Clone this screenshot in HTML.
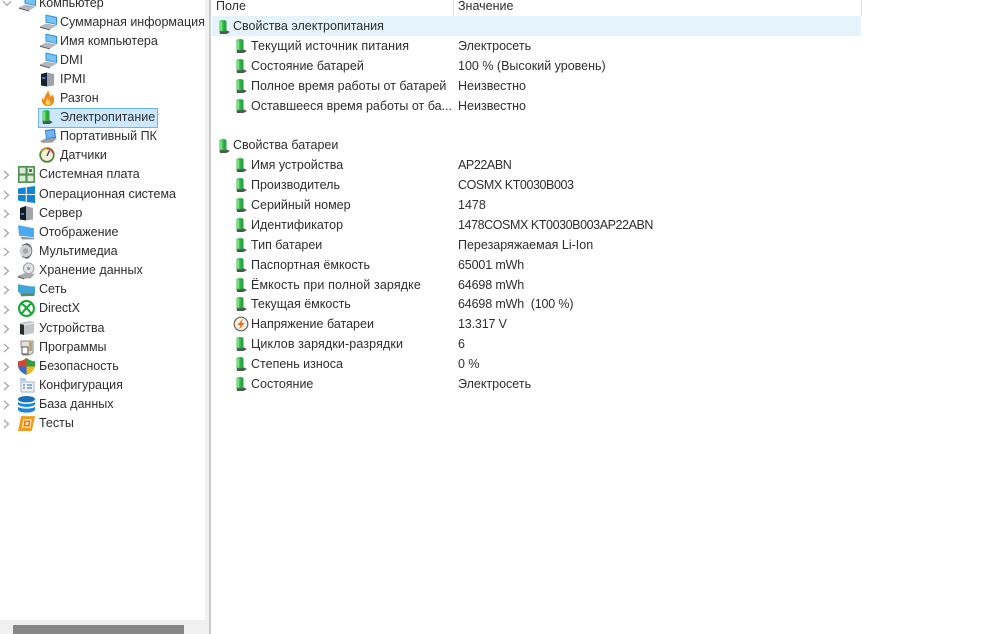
<!DOCTYPE html>
<html lang="ru">
<head>
<meta charset="utf-8">
<title>AIDA64</title>
<style>
html,body{margin:0;padding:0;background:#fff;}
#p{position:relative;width:1000px;height:634px;overflow:hidden;background:#fff;font-family:"Liberation Sans",sans-serif;font-size:12.5px;color:#2e2e2e;}
.t{position:absolute;white-space:nowrap;line-height:16px;height:16px;}
.l{letter-spacing:-.42px;}
.n{letter-spacing:-.15px;}
.w{letter-spacing:.12px;}
.i{position:absolute;width:16px;height:16px;overflow:visible;}
.c{position:absolute;width:18px;height:18px;overflow:visible;}
.a{position:absolute;width:8px;height:10px;}
.b{position:absolute;}
</style>
</head>
<body>
<div id="p">
<svg width="0" height="0" style="position:absolute">
<defs>
<symbol id="bat" viewBox="0 0 16 16"><path d="M1.500 2Q5 0 8.500 2V12.500H1.500Z" fill="#3fc252"/><path d="M5.500 1.200Q7.500 1.300 8.500 2V12.500H5.500Z" fill="#25a640"/><path d="M2.300 2.500H3.800V11.500H2.300Z" fill="#8ee88c"/><path d="M1.500 12.300H8.500V11.200L12 13L8.500 15H2Z" fill="#4a5a50"/></symbol>
<symbol id="pc" viewBox="0 0 18 18"><path d="M5.500 1.500L17 4V12L5.500 9.500Z" fill="#2f8fdc"/><path d="M6.500 2.800L16 4.900V11L6.500 8.800Z" fill="#79c3f3"/><path d="M0 13.500L6 10.500L17 12.500L10 16.500Z" fill="#b4b7ba"/><path d="M0 13.500L10 16.500V17.500L0 14.700Z" fill="#5c6064"/></symbol>
<symbol id="arr" viewBox="0 0 8 10"><path d="M2 1L6.500 5L2 9" fill="none" stroke="#a3a3a3" stroke-width="1.200"/></symbol>
</defs>
</svg>

<!-- panes -->
<div class="b" style="left:205px;top:0;width:4px;height:634px;background:#f0f0f0"></div>
<div class="b" style="left:209px;top:0;width:2px;height:634px;background:#cbcbcb"></div>
<div class="b" style="left:0;top:620px;width:205px;height:14px;background:#f0f0f0"></div>
<div class="b" style="left:13px;top:625px;width:171px;height:9px;background:#878787"></div>

<!-- selected -->
<div class="b" style="left:38px;top:108px;width:118px;height:18px;background:#cce8ff;border:1px solid #6fb2e6"></div>

<!-- tree -->
<svg class="a" style="left:3px;top:-2px;transform:rotate(90deg)"><use href="#arr"/></svg>
<svg class="c" style="left:19px;top:-6px"><use href="#pc"/></svg>
<div class="t" style="left:39px;top:-5px">Компьютер</div>

<svg class="c" style="left:40px;top:13px"><use href="#pc"/></svg>
<div class="t" style="left:60px;top:14px">Суммарная информация</div>
<svg class="c" style="left:40px;top:32px"><use href="#pc"/></svg>
<div class="t" style="left:60px;top:33px">Имя компьютера</div>
<svg class="c" style="left:40px;top:51px"><use href="#pc"/></svg>
<div class="t" style="left:60px;top:52px">DMI</div>
<svg class="i" style="left:40px;top:71px" viewBox="0 0 16 16"><path d="M1 3L7 1.500V15.500L1 14.500Z" fill="#16202e"/><path d="M7 1.500L14 3V14.500L7 15.500Z" fill="#9da3aa"/><path d="M2 6H5.500V8H2Z" fill="#3f7fc0"/></svg>
<div class="t" style="left:60px;top:71px">IPMI</div>
<svg class="i" style="left:40px;top:90px" viewBox="0 0 16 16"><path d="M8 16C3 16 1 12 2 8L4 10C4 6 7 4 8 0C9 3 10 5 10.500 7L12.500 4.500C15 8 15.500 16 8 16Z" fill="#f08a1c"/><path d="M8 15C5.500 15 5 12 7.500 8.500C8 10 11 11 10.500 13C10 14.500 9 15 8 15Z" fill="#ffd75a"/></svg>
<div class="t" style="left:60px;top:90px">Разгон</div>
<svg class="i" style="left:41px;top:109px"><use href="#bat"/></svg>
<div class="t" style="left:60px;top:109px">Электропитание</div>
<svg class="c" style="left:40px;top:127px" viewBox="0 0 18 18"><path d="M5 3L15 2L16 11L6 12Z" fill="#2f7fd0"/><path d="M6 4L14 3.200L14.800 10L6.800 11Z" fill="#6db5ee"/><path d="M0 14L5.500 11.500L17 11L12.500 15.500L3 16Z" fill="#9a9ea3"/></svg>
<div class="t" style="left:60px;top:128px">Портативный ПК</div>
<svg class="i" style="left:39px;top:147px" viewBox="0 0 16 16"><circle cx="8" cy="8" r="6.800" fill="#f5efe0" stroke="#4f8a3a" stroke-width="1.800"/><path d="M2.500 5A6.500 6.500 0 0 1 8 1.500" fill="none" stroke="#d9a020" stroke-width="1.800"/><path d="M8 1.500A6.500 6.500 0 0 1 14 6" fill="none" stroke="#c8402a" stroke-width="1.800"/><path d="M8 9L10.500 3.500" stroke="#444" stroke-width="1.400"/></svg>
<div class="t" style="left:60px;top:147px">Датчики</div>

<svg class="a" style="left:2px;top:170px"><use href="#arr"/></svg>
<svg class="i" style="left:18px;top:166px;width:17px;height:17px" viewBox="0 0 16 16"><path d="M0 0H16V16H0Z" fill="#4f8f52"/><path d="M1.500 1.500H7V7H1.500ZM9 1.500H14.500V7H9ZM1.500 9H7V14.500H1.500ZM9 9H14.500V14.500H9Z" fill="#dbe9d8"/><path d="M10.500 3H13V5.500H10.500Z" fill="#2f6f35"/></svg>
<div class="t" style="left:39px;top:166px">Системная плата</div>

<svg class="a" style="left:2px;top:190px"><use href="#arr"/></svg>
<svg class="i" style="left:18px;top:186px;width:17px;height:17px" viewBox="0 0 16 16"><path d="M0 2.300L7.300 1.200V7.500H0ZM8.300 1L16 0V7.500H8.300ZM0 8.500H7.300V14.800L0 13.700ZM8.300 8.500H16V16L8.300 15Z" fill="#0f84d8"/></svg>
<div class="t" style="left:39px;top:186px">Операционная система</div>

<svg class="a" style="left:2px;top:209px"><use href="#arr"/></svg>
<svg class="i" style="left:19px;top:205px" viewBox="0 0 16 16"><path d="M1 3L7 1V15.500L1 14.500Z" fill="#121b28"/><path d="M7 1L14 3V14.500L7 15.500Z" fill="#a0a4a8"/><path d="M2 8H5V10H2Z" fill="#3f7fc0"/></svg>
<div class="t" style="left:39px;top:205px">Сервер</div>

<svg class="a" style="left:2px;top:228px"><use href="#arr"/></svg>
<svg class="i" style="left:18px;top:224px;width:17px;height:17px" viewBox="0 0 16 16"><path d="M0 1L15 4V12.500L1 11Z" fill="#4aa8ee"/><path d="M2 12L15 13V14.500L4 14.500Z" fill="#8d9297"/></svg>
<div class="t" style="left:39px;top:224px">Отображение</div>

<svg class="a" style="left:2px;top:247px"><use href="#arr"/></svg>
<svg class="i" style="left:19px;top:243px" viewBox="0 0 16 16"><path d="M3 2L8 0C15 2 15 13 8 16L3 14Z" fill="#6a6d70"/><circle cx="6.500" cy="8" r="6" fill="#d0d2d4"/><circle cx="6.500" cy="8" r="2.800" fill="#a4a6a8"/></svg>
<div class="t" style="left:39px;top:243px">Мультимедиа</div>

<svg class="a" style="left:2px;top:266px"><use href="#arr"/></svg>
<svg class="i" style="left:18px;top:262px;width:17px;height:17px" viewBox="0 0 16 16"><circle cx="10" cy="6" r="5" fill="#dfe1e3" stroke="#a4a7aa"/><circle cx="10" cy="6" r="1.500" fill="#9a9da0"/><path d="M0 13L6 10.500L16 11L12 15.500L6 15.500Z" fill="#a8abae"/><path d="M0 13L6 15.500V16.500L0 14.500Z" fill="#555"/></svg>
<div class="t" style="left:39px;top:262px">Хранение данных</div>

<svg class="a" style="left:2px;top:285px"><use href="#arr"/></svg>
<svg class="i" style="left:18px;top:281px;width:17px;height:17px" viewBox="0 0 16 16"><path d="M0 3L12 5L16 5V12L3 12.500L0 10Z" fill="#3fa5d8"/><path d="M2 12L15.500 11.500V14L3 14.500Z" fill="#5a8a60"/></svg>
<div class="t" style="left:39px;top:281px">Сеть</div>

<svg class="a" style="left:2px;top:305px"><use href="#arr"/></svg>
<svg class="i" style="left:18px;top:300px;width:17px;height:17px" viewBox="0 0 16 16"><circle cx="8" cy="8" r="7" fill="#fff" stroke="#15a832" stroke-width="2"/><path d="M3.500 3.500C6 4.500 10 10 12.500 12.500M12.500 3.500C10 4.500 6 10 3.500 12.500" fill="none" stroke="#15a832" stroke-width="2"/></svg>
<div class="t" style="left:39px;top:300px">DirectX</div>

<svg class="a" style="left:2px;top:324px"><use href="#arr"/></svg>
<svg class="i" style="left:19px;top:320px" viewBox="0 0 16 16"><path d="M1 3L11 1L15 2V13L5 15L1 14Z" fill="#c2c4c6"/><path d="M1 4L5 5V15L1 14Z" fill="#2a2c30"/><path d="M5 5L15 3" stroke="#eee"/></svg>
<div class="t" style="left:39px;top:320px">Устройства</div>

<svg class="a" style="left:2px;top:343px"><use href="#arr"/></svg>
<svg class="i" style="left:19px;top:339px" viewBox="0 0 16 16"><path d="M2 2H14V14L10 16H4V8H2Z" fill="#e3e0d8" stroke="#8f8a80"/><path d="M3 8H9V15H3Z" fill="#fff" stroke="#555"/><path d="M10 3H13V12H10Z" fill="#b8a678"/></svg>
<div class="t" style="left:39px;top:339px">Программы</div>

<svg class="a" style="left:2px;top:362px"><use href="#arr"/></svg>
<svg class="i" style="left:18px;top:358px;width:17px;height:17px" viewBox="0 0 16 16"><path d="M0 3Q4 3 8 0V8H0Z" fill="#d8452c"/><path d="M8 0Q12 3 16 3V8H8Z" fill="#2f9e44"/><path d="M0 8H8V16Q1 13 0 8Z" fill="#2d6fd2"/><path d="M8 8H16Q15 13 8 16Z" fill="#f2b51f"/></svg>
<div class="t" style="left:39px;top:358px">Безопасность</div>

<svg class="a" style="left:2px;top:381px"><use href="#arr"/></svg>
<svg class="i" style="left:19px;top:377px" viewBox="0 0 16 16"><path d="M1 1H6L8 4H1Z" fill="#b5cbdc"/><path d="M2 5H15V15H2Z" fill="#eef3f7" stroke="#9db3c4"/><path d="M4 8H6M4 11H6M8 8H13M8 11H13" stroke="#4e86b5" stroke-width="1.200"/></svg>
<div class="t" style="left:39px;top:377px">Конфигурация</div>

<svg class="a" style="left:2px;top:400px"><use href="#arr"/></svg>
<svg class="i" style="left:18px;top:396px;width:17px;height:17px" viewBox="0 0 16 16"><ellipse cx="8" cy="3" rx="8" ry="3" fill="#1b6fb8"/><path d="M0 5.500C2 8 14 8 16 5.500V8C14 11 2 11 0 8Z" fill="#1b86d8"/><path d="M0 10C2 12.500 14 12.500 16 10V13C14 16.500 2 16.500 0 13Z" fill="#1b86d8"/></svg>
<div class="t" style="left:39px;top:396px">База данных</div>

<svg class="a" style="left:2px;top:419px"><use href="#arr"/></svg>
<svg class="i" style="left:18px;top:415px;width:17px;height:17px" viewBox="0 0 16 16"><path d="M3 1H16L13 15H0Z" fill="#f39a1e"/><path d="M5 4H13L11.500 12H3.500Z" fill="#fce3b5"/><path d="M6.500 6H11L10.300 10H5.800Z" fill="none" stroke="#d87c0a" stroke-width="1.300"/></svg>
<div class="t" style="left:39px;top:415px">Тесты</div>

<!-- list header -->
<div class="b" style="left:453px;top:0;width:1px;height:16px;background:#e3e3e3"></div>
<div class="b" style="left:861px;top:0;width:1px;height:16px;background:#e3e3e3"></div>
<div class="t" style="left:216px;top:-2px">Поле</div>
<div class="t" style="left:458px;top:-2px">Значение</div>

<div class="b" style="left:212px;top:16px;width:649px;height:20px;background:#e5f3fd"></div>

<svg class="i" style="left:218px;top:19px"><use href="#bat"/></svg>
<div class="t" style="left:233px;top:18px">Свойства электропитания</div>

<svg class="i" style="left:235px;top:38px"><use href="#bat"/></svg>
<div class="t w" style="left:251px;top:38px">Текущий источник питания</div>
<div class="t" style="left:458px;top:38px">Электросеть</div>

<svg class="i" style="left:235px;top:58px"><use href="#bat"/></svg>
<div class="t" style="left:251px;top:58px">Состояние батарей</div>
<div class="t" style="left:458px;top:58px">100 % (Высокий уровень)</div>

<svg class="i" style="left:235px;top:78px"><use href="#bat"/></svg>
<div class="t" style="left:251px;top:78px">Полное время работы от батарей</div>
<div class="t" style="left:458px;top:78px">Неизвестно</div>

<svg class="i" style="left:235px;top:98px"><use href="#bat"/></svg>
<div class="t" style="left:251px;top:98px">Оставшееся время работы от ба...</div>
<div class="t" style="left:458px;top:98px">Неизвестно</div>

<svg class="i" style="left:218px;top:138px"><use href="#bat"/></svg>
<div class="t" style="left:233px;top:137px">Свойства батареи</div>

<svg class="i" style="left:235px;top:157px"><use href="#bat"/></svg>
<div class="t" style="left:251px;top:157px">Имя устройства</div>
<div class="t l" style="left:458px;top:157px">AP22ABN</div>

<svg class="i" style="left:235px;top:177px"><use href="#bat"/></svg>
<div class="t" style="left:251px;top:177px">Производитель</div>
<div class="t l" style="left:458px;top:177px">COSMX KT0030B003</div>

<svg class="i" style="left:235px;top:197px"><use href="#bat"/></svg>
<div class="t" style="left:251px;top:197px">Серийный номер</div>
<div class="t" style="left:458px;top:197px">1478</div>

<svg class="i" style="left:235px;top:217px"><use href="#bat"/></svg>
<div class="t" style="left:251px;top:217px">Идентификатор</div>
<div class="t l" style="left:458px;top:217px">1478COSMX KT0030B003AP22ABN</div>

<svg class="i" style="left:235px;top:237px"><use href="#bat"/></svg>
<div class="t" style="left:251px;top:237px">Тип батареи</div>
<div class="t" style="left:458px;top:237px">Перезаряжаемая Li-Ion</div>

<svg class="i" style="left:235px;top:257px"><use href="#bat"/></svg>
<div class="t" style="left:251px;top:257px">Паспортная ёмкость</div>
<div class="t n" style="left:458px;top:257px">65001 mWh</div>

<svg class="i" style="left:235px;top:277px"><use href="#bat"/></svg>
<div class="t w" style="left:251px;top:277px">Ёмкость при полной зарядке</div>
<div class="t n" style="left:458px;top:277px">64698 mWh</div>

<svg class="i" style="left:235px;top:296px"><use href="#bat"/></svg>
<div class="t" style="left:251px;top:296px">Текущая ёмкость</div>
<div class="t n" style="left:458px;top:296px;white-space:pre">64698 mWh  (100 %)</div>

<svg class="i" style="left:233px;top:316px" viewBox="0 0 16 16"><circle cx="8" cy="8" r="6.800" fill="#f5f1e8" stroke="#6b6255" stroke-width="1.200"/><path d="M10 2.500L4.500 9H7.500L6 13.500L11.500 7H8.500Z" fill="#ee6a12"/></svg>
<div class="t" style="left:251px;top:316px">Напряжение батареи</div>
<div class="t n" style="left:458px;top:316px">13.317 V</div>

<svg class="i" style="left:235px;top:336px"><use href="#bat"/></svg>
<div class="t w" style="left:251px;top:336px">Циклов зарядки-разрядки</div>
<div class="t" style="left:458px;top:336px">6</div>

<svg class="i" style="left:235px;top:356px"><use href="#bat"/></svg>
<div class="t" style="left:251px;top:356px">Степень износа</div>
<div class="t" style="left:458px;top:356px">0 %</div>

<svg class="i" style="left:235px;top:376px"><use href="#bat"/></svg>
<div class="t" style="left:251px;top:376px">Состояние</div>
<div class="t" style="left:458px;top:376px">Электросеть</div>
</div>
</body>
</html>
